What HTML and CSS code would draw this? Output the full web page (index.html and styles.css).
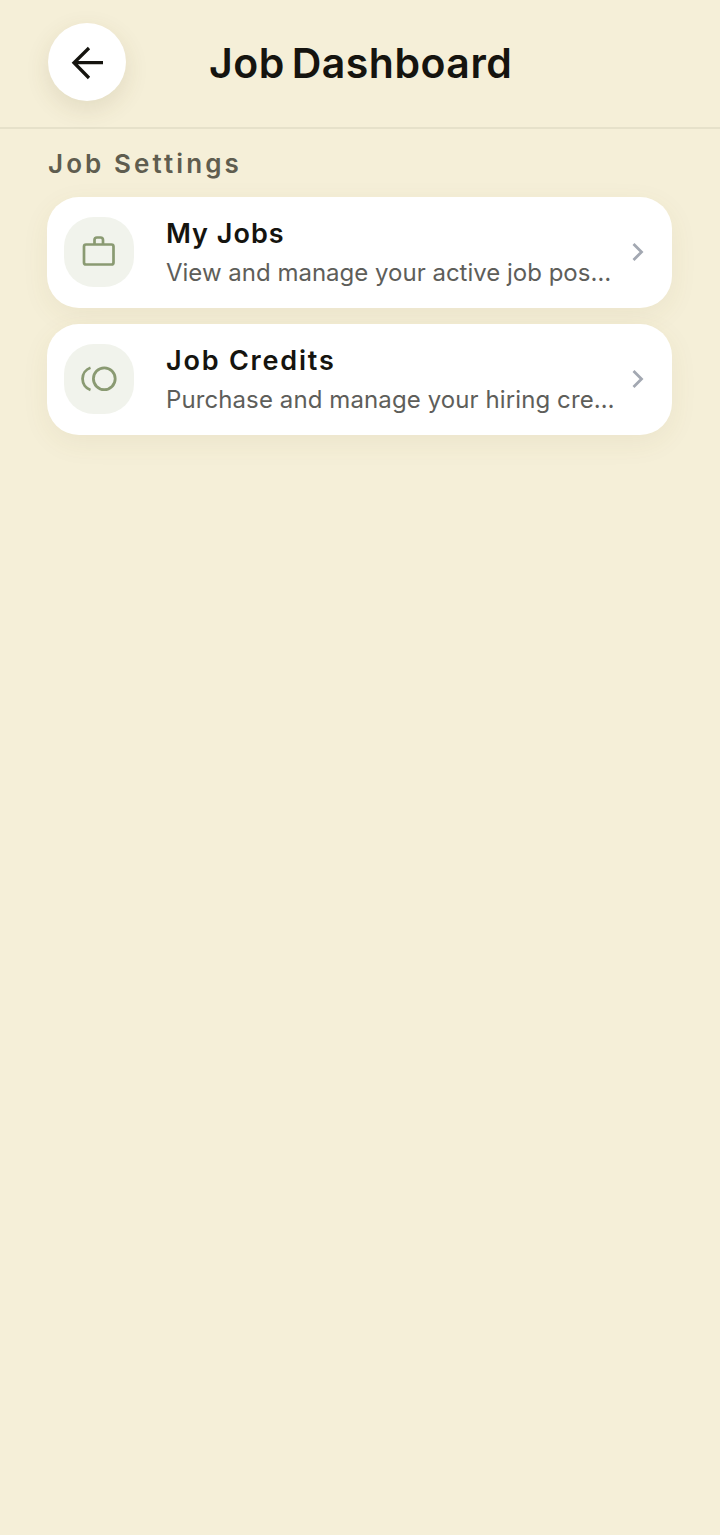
FILE: index.html
```html
<!DOCTYPE html>
<html lang="en">
<head>
<meta charset="utf-8">
<title>Job Dashboard</title>
<link rel="stylesheet" href="styles.css">
</head>
<body>
<header class="header">
  <button class="back" aria-label="Back">
    <svg class="back-icon" viewBox="0 0 78 78" fill="none"><path d="M55 39.700H27M41 25 26 39.700 41 55" stroke="#15140f" stroke-width="3.300"/></svg>
  </button>
  <h1 class="title">Job Dashboard</h1>
</header>
<main class="main">
  <h2 class="section">Job Settings</h2>
  <div class="list">
    <a class="card">
      <span class="tile">
        <svg class="tile-icon" viewBox="0 0 36 36" fill="none" stroke="#8a9a72" stroke-width="2.700" stroke-linejoin="round"><rect x="3" y="10.500" width="29.500" height="20" rx="2"/><path d="M13.500 10.500V6a2.500 2.500 0 0 1 2.500-2.500h3.500A2.500 2.500 0 0 1 22 6v4.500"/></svg>
      </span>
      <span class="text">
        <span class="name name-a">My Jobs</span>
        <span class="desc desc-a">View and manage your active job postings</span>
      </span>
      <svg class="chev" viewBox="0 0 14 20" fill="none"><path d="M2.500 2 10.500 10 2.500 18" stroke="#a3a8b2" stroke-width="2.800"/></svg>
    </a>
    <a class="card">
      <span class="tile">
        <svg class="tile-icon" viewBox="0 0 36 36" fill="none" stroke="#8a9a72" stroke-width="2.800"><circle cx="23.300" cy="17.800" r="10.900"/><path d="M9.500 6.700A11.800 11.800 0 0 0 9.500 29"/></svg>
      </span>
      <span class="text">
        <span class="name">Job Credits</span>
        <span class="desc desc-b">Purchase and manage your hiring credits balance</span>
      </span>
      <svg class="chev" viewBox="0 0 14 20" fill="none"><path d="M2.500 2 10.500 10 2.500 18" stroke="#a3a8b2" stroke-width="2.800"/></svg>
    </a>
  </div>
</main>
</body>
</html>
```
FILE: styles.css
```css
* { box-sizing: border-box; }
html, body { margin: 0; padding: 0; }
body {
  width: 720px;
  height: 1535px;
  background: #f5efd8;
  font-family: Inter, "Noto Sans", sans-serif;
  overflow: hidden;
}
.header {
  height: 129px;
  border-bottom: 2px solid #e6e1ca;
  display: flex;
  align-items: flex-start;
  padding: 23px 48px 0;
}
.back {
  width: 78px;
  height: 78px;
  flex: none;
  border: 0;
  padding: 0;
  border-radius: 50%;
  background: #fff;
  box-shadow: 0 8px 24px rgba(90, 75, 30, 0.12);
  display: flex;
  align-items: center;
  justify-content: center;
}
.back-icon { width: 78px; height: 78px; }
.title {
  margin: 14px 0 0 83px;
  font-size: 41px;
  line-height: 52px;
  font-weight: 600;
  letter-spacing: 0.5px;
  word-spacing: -4px;
  color: #15140f;
}
.main { padding: 21px 47.7px 0 47.3px; }
.section {
  margin: 0 0 0 0.7px;
  font-size: 26px;
  line-height: 28px;
  font-weight: 600;
  letter-spacing: 3.1px;
  color: #5f5d4f;
}
.list {
  margin-top: 19px;
  display: flex;
  flex-direction: column;
  gap: 16px;
}
.card {
  height: 111px;
  background: #fff;
  border-radius: 32px;
  box-shadow: 0 8px 28px rgba(120, 100, 40, 0.07);
  display: flex;
  align-items: center;
  padding: 0 27.5px 1px 16.7px;
}
.tile {
  width: 70px;
  height: 70px;
  flex: none;
  border-radius: 30px;
  background: #f1f3ec;
  display: flex;
  align-items: center;
  justify-content: center;
}
.tile-icon { width: 36px; height: 36px; }
.text {
  margin: 2px 0 0 32px;
  flex: 1;
  min-width: 0;
  display: flex;
  flex-direction: column;
}
.name {
  font-size: 27px;
  line-height: 32px;
  font-weight: 600;
  letter-spacing: 1.8px;
  color: #15140f;
}
.name-a { letter-spacing: 1px; }
.desc {
  margin-top: 7px;
  font-size: 24px;
  line-height: 32px;
  letter-spacing: 0.1px;
  color: #5e5e5a;
  white-space: nowrap;
  overflow: hidden;
  text-overflow: ellipsis;
}
.desc-a { width: 449px; letter-spacing: 0; }
.desc-b { width: 451px; }
.chev { width: 14px; height: 20px; flex: none; }
```
